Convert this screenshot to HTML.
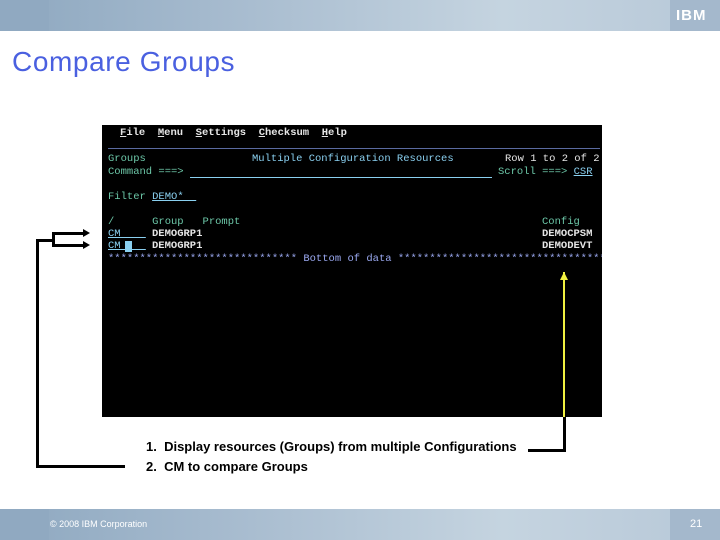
<!DOCTYPE html>
<html><head><style>
body{margin:0;width:720px;height:540px;position:relative;background:#fff;font-family:"Liberation Sans",sans-serif;overflow:hidden}
.hdr{position:absolute;left:0;top:0;width:720px;height:31px;background:linear-gradient(90deg,#8ea8c0 0%,#a9bdd0 35%,#c5d4e0 70%,#b7c8d8 100%)}
.ftr{position:absolute;left:0;top:509px;width:720px;height:31px;background:linear-gradient(90deg,#8ea8c0 0%,#a9bdd0 35%,#c5d4e0 70%,#b7c8d8 100%)}
.blk{position:absolute;top:0;height:31px;background:#9bb2c8}
.scr{position:absolute;left:102px;top:125px;width:500px;height:292px;background:#000;font-family:"Liberation Mono",monospace;font-size:10.5px;line-height:12.5px;overflow:hidden}
.scr div{position:absolute;white-space:pre}
.g{color:#6cc7a8}.b{color:#8ad0f0}.w{color:#e6e6e6;font-weight:bold}.p{color:#9aa8f0}
.ln{position:absolute;background:#000}
</style></head><body>
<div class="hdr"><div class="blk" style="left:0;width:49px;background:#90a9c1"></div><div class="blk" style="left:670px;width:50px;background:#a4b8cc"></div>
<div style="position:absolute;left:676px;top:7px;color:#fff;font:bold 15px 'Liberation Sans';letter-spacing:1px">IBM</div></div>
<div style="position:absolute;left:12px;top:46px;color:#4a60e0;font-size:28px;letter-spacing:0.6px">Compare Groups</div>
<div class="scr">
<div class="w" style="left:18px;top:2px"><u>F</u>ile  <u>M</u>enu  <u>S</u>ettings  <u>C</u>hecksum  <u>H</u>elp</div>
<div style="left:6px;top:23px;width:492px;height:1px;background:#5a6aa0"></div>
<div class="g" style="left:6px;top:28px">Groups</div>
<div class="b" style="left:150px;top:28px">Multiple Configuration Resources</div>
<div class="w" style="left:403px;top:28px;font-weight:normal">Row 1 to 2 of 2</div>
<div class="g" style="left:6px;top:41px">Command ===></div>
<div style="left:88px;top:52px;width:302px;height:1px;background:#8ad0f0"></div>
<div class="g" style="left:396px;top:41px">Scroll ===> <u class="b">CSR</u></div>
<div class="g" style="left:6px;top:66px">Filter <u class="b">DEMO*  </u></div>
<div class="g" style="left:6px;top:91px">/      Group   Prompt</div>
<div class="g" style="left:440px;top:91px">Config</div>
<div class="b" style="left:6px;top:103px"><u>CM    </u></div>
<div class="w" style="left:50px;top:103px">DEMOGRP1</div>
<div class="w" style="left:440px;top:103px">DEMOCPSM</div>
<div class="b" style="left:6px;top:115px"><u>CM    </u></div>
<div style="left:23px;top:116px;width:7px;height:11px;background:#8ad0f0"></div>
<div class="w" style="left:50px;top:115px">DEMOGRP1</div>
<div class="w" style="left:440px;top:115px">DEMODEVT</div>
<div class="p" style="left:6px;top:128px">****************************** Bottom of data ************************************</div>
<div style="left:461px;top:147px;width:2px;height:145px;background:#f0f040"></div>
<div style="left:458px;top:147px;width:0;height:0;border-left:4px solid transparent;border-right:4px solid transparent;border-bottom:8px solid #f0f040"></div>
</div>
<div class="ln" style="left:36px;top:239px;width:3px;height:229px"></div>
<div class="ln" style="left:36px;top:465px;width:89px;height:3px"></div>
<div class="ln" style="left:36px;top:239px;width:18px;height:3px"></div>
<div class="ln" style="left:52px;top:232px;width:3px;height:15px"></div>
<div class="ln" style="left:52px;top:232px;width:32px;height:3px"></div>
<div class="ln" style="left:52px;top:244px;width:32px;height:3px"></div>
<div style="position:absolute;left:83px;top:229px;border-top:4.5px solid transparent;border-bottom:4.5px solid transparent;border-left:7px solid #000"></div>
<div style="position:absolute;left:83px;top:241px;border-top:4.5px solid transparent;border-bottom:4.5px solid transparent;border-left:7px solid #000"></div>
<div class="ln" style="left:563px;top:417px;width:3px;height:35px"></div>
<div class="ln" style="left:528px;top:449px;width:38px;height:3px"></div>
<div style="position:absolute;left:146px;top:437px;font-size:13px;font-weight:bold;line-height:20px;color:#000">1.&nbsp; Display resources (Groups) from multiple Configurations<br>2.&nbsp; CM to compare Groups</div>
<div class="ftr"><div class="blk" style="left:0;width:49px;top:0;background:#90a9c1"></div><div class="blk" style="left:670px;width:50px;top:0;background:#a4b8cc"></div>
<div style="position:absolute;left:50px;top:10px;color:#fff;font-size:9px">© 2008 IBM Corporation</div>
<div style="position:absolute;left:690px;top:9px;color:#fff;font-size:11px">21</div></div>
</body></html>
